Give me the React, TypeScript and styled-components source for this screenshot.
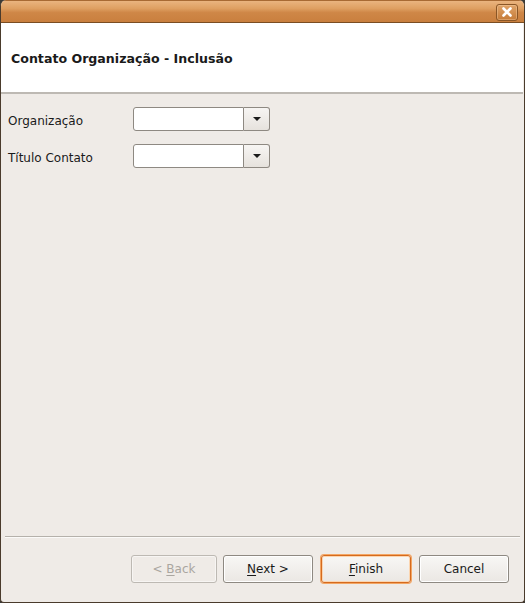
import React from "react";
import styled, { createGlobalStyle } from "styled-components";

const GlobalStyle = createGlobalStyle`
  html, body {
    margin: 0;
    padding: 0;
    background: #3c3b37;
  }
  body {
    font-family: "DejaVu Sans", "Liberation Sans", sans-serif;
  }
`;

const Frame = styled.div`
  width: 525px;
  height: 603px;
  box-sizing: border-box;
  display: flex;
  flex-direction: column;
  background: #efebe7;
  border: 1px solid #4a3b2c;
  border-top: none;
  border-radius: 6px 6px 4px 4px;
  overflow: hidden;
`;

const TitleBar = styled.div`
  height: 23px;
  flex: none;
  box-sizing: border-box;
  display: flex;
  justify-content: flex-end;
  align-items: center;
  padding-right: 6px;
  border-top: 1px solid #a86a33;
  border-bottom: 1px solid #7a4d22;
  background: linear-gradient(
    to bottom,
    #eab47f 0%,
    #dfa062 35%,
    #cf8747 55%,
    #c97f3e 100%
  );
`;

const CloseButton = styled.div`
  width: 22px;
  height: 17px;
  box-sizing: border-box;
  margin-top: 1px;
  display: flex;
  align-items: center;
  justify-content: center;
  border: 1px solid #8a5626;
  border-radius: 3px;
  background: linear-gradient(to bottom, #e0a469, #c57b38);
  box-shadow: inset 0 0 0 1px rgba(255, 220, 180, 0.35);
`;

const Header = styled.div`
  height: 69px;
  flex: none;
  display: flex;
  align-items: center;
  padding-left: 10px;
  background:
    radial-gradient(ellipse 100px 80px at 115% 65%, #cfdbf2 0%, #dfe7f7 45%, rgba(255, 255, 255, 0) 80%),
    #ffffff;
  border-bottom: 2px solid #bdb9b3;
  margin-right: 1px;
`;

const HeaderTitle = styled.h1`
  margin: 0;
  padding-top: 1px;
  font-size: 12.6px;
  font-weight: bold;
  color: #1a1a1a;
`;

const Form = styled.div`
  flex: 1;
  display: grid;
  grid-template-columns: 124px auto;
  grid-auto-rows: 24px;
  row-gap: 13px;
  align-content: start;
  justify-content: start;
  padding: 13px 0 0 7px;
`;

const Label = styled.label`
  display: flex;
  align-items: center;
  font-size: 12px;
  color: #1a1a1a;
  padding-top: 3px;
`;

const Combo = styled.div`
  display: flex;
  height: 24px;
  margin-left: 1px;
`;

const ComboInput = styled.div`
  width: 111px;
  box-sizing: border-box;
  background: #ffffff;
  border: 1px solid #8e8982;
  border-radius: 3px 0 0 3px;
`;

const ComboButton = styled.div`
  width: 26px;
  box-sizing: border-box;
  display: flex;
  align-items: center;
  justify-content: center;
  background: linear-gradient(to bottom, #f7f5f3, #e6e2dd);
  border: 1px solid #8e8982;
  border-left: none;
  border-radius: 0 3px 3px 0;
`;

const Arrow = styled.span`
  width: 0;
  height: 0;
  border-left: 4px solid transparent;
  border-right: 4px solid transparent;
  border-top: 4px solid #1a1a1a;
`;

const Footer = styled.div`
  flex: none;
  display: flex;
  flex-direction: column;
  padding: 0 4px 0 4px;
`;

const Separator = styled.div`
  height: 1px;
  background: #b5b1ab;
  border-bottom: 1px solid #fbfaf9;
`;

const ButtonRow = styled.div`
  display: flex;
  justify-content: flex-end;
  gap: 6px;
  padding: 17px 11px 19px 0;
`;

const Button = styled.button<{ $focused?: boolean; $gap?: number; $width?: number }>`
  width: ${(p) => p.$width ?? 90}px;
  height: 28px;
  margin-left: ${(p) => p.$gap ?? 0}px;
  box-sizing: border-box;
  font-family: "DejaVu Sans", "Liberation Sans", sans-serif;
  font-size: 12px;
  color: #1a1a1a;
  border-radius: 3px;
  border: 1px solid ${(p) => (p.$focused ? "#d56a1e" : "#8e8982")};
  box-shadow: ${(p) =>
    p.$focused ? "0 0 0 1px #f3a664, inset 0 0 0 1px #fbd5b0" : "inset 0 0 0 1px #ffffff"};
  background: linear-gradient(to bottom, #f8f7f5, #ebe7e3);
  padding: 0;

  &:disabled {
    color: #aaa6a0;
    border-color: #bdb9b3;
    background: #efebe7;
    box-shadow: inset 0 0 0 1px #f7f5f3;
  }

  u {
    text-underline-offset: 2px;
  }
`;

export default function App() {
  return (
    <>
      <GlobalStyle />
      <Frame>
        <TitleBar>
          <CloseButton>
            <svg width="12" height="12" viewBox="0 0 12 12">
              <path
                d="M2.5 2.5 L9.5 9.5 M9.5 2.5 L2.5 9.5"
                stroke="#ffffff"
                strokeWidth="2.6"
                strokeLinecap="round"
              />
            </svg>
          </CloseButton>
        </TitleBar>
        <Header>
          <HeaderTitle>Contato Organização - Inclusão</HeaderTitle>
        </Header>
        <Form>
          <Label>Organização</Label>
          <Combo>
            <ComboInput />
            <ComboButton>
              <Arrow />
            </ComboButton>
          </Combo>
          <Label>Título Contato</Label>
          <Combo>
            <ComboInput />
            <ComboButton>
              <Arrow />
            </ComboButton>
          </Combo>
        </Form>
        <Footer>
          <Separator />
          <ButtonRow>
            <Button disabled $width={86}>
              &lt; <u>B</u>ack
            </Button>
            <Button>
              <u>N</u>ext &gt;
            </Button>
            <Button $focused $gap={2}>
              <u>F</u>inish
            </Button>
            <Button $gap={2}>Cancel</Button>
          </ButtonRow>
        </Footer>
      </Frame>
    </>
  );
}
